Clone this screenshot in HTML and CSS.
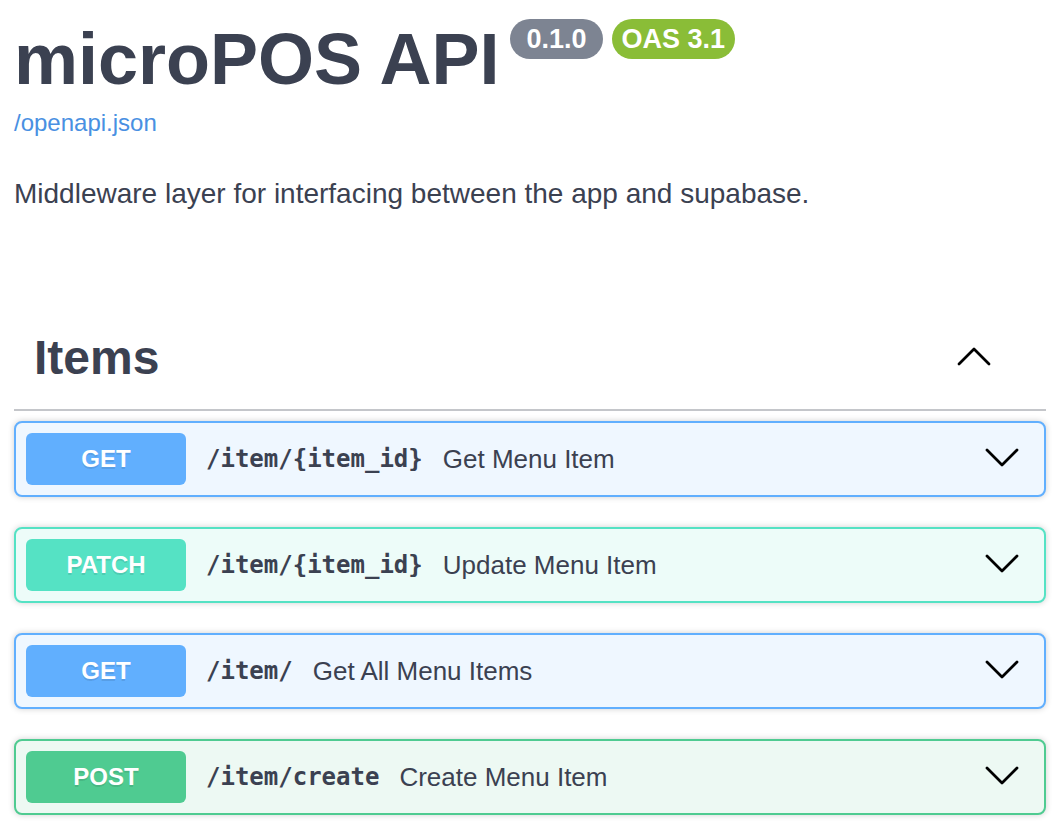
FILE: index.html
```html
<!DOCTYPE html>
<html lang="en">
<head>
<meta charset="utf-8">
<title>microPOS API</title>
<link rel="stylesheet" href="styles.css">
</head>
<body>
<div class="page">
  <div class="info">
    <div class="title-row">
      <h2 class="title">microPOS API</h2>
      <span class="badge badge-version">0.1.0</span>
      <span class="badge badge-oas">OAS 3.1</span>
    </div>
    <a class="spec-link" href="#">/openapi.json</a>
    <p class="description">Middleware layer for interfacing between the app and supabase.</p>
  </div>

  <section class="tag-section">
    <h3 class="tag-header">
      <span class="tag-name">Items</span>
      <svg class="arrow arrow-up" width="40" height="40" viewBox="0 0 20 20"><polyline points="2.5,13.5 10,6 17.5,13.5" /></svg>
    </h3>

    <div class="opblock opblock-get">
      <div class="summary">
        <span class="method">GET</span>
        <span class="path">/item/{item_id}</span>
        <span class="summary-desc">Get Menu Item</span>
        <svg class="arrow arrow-down" width="40" height="40" viewBox="0 0 20 20"><polyline points="2.5,5.5 10,13 17.5,5.5" /></svg>
      </div>
    </div>

    <div class="opblock opblock-patch">
      <div class="summary">
        <span class="method">PATCH</span>
        <span class="path">/item/{item_id}</span>
        <span class="summary-desc">Update Menu Item</span>
        <svg class="arrow arrow-down" width="40" height="40" viewBox="0 0 20 20"><polyline points="2.5,5.5 10,13 17.5,5.5" /></svg>
      </div>
    </div>

    <div class="opblock opblock-get">
      <div class="summary">
        <span class="method">GET</span>
        <span class="path">/item/</span>
        <span class="summary-desc">Get All Menu Items</span>
        <svg class="arrow arrow-down" width="40" height="40" viewBox="0 0 20 20"><polyline points="2.5,5.5 10,13 17.5,5.5" /></svg>
      </div>
    </div>

    <div class="opblock opblock-post">
      <div class="summary">
        <span class="method">POST</span>
        <span class="path">/item/create</span>
        <span class="summary-desc">Create Menu Item</span>
        <svg class="arrow arrow-down" width="40" height="40" viewBox="0 0 20 20"><polyline points="2.5,5.5 10,13 17.5,5.5" /></svg>
      </div>
    </div>
  </section>
</div>
</body>
</html>
```
FILE: styles.css
```css
html, body {
  margin: 0;
  padding: 0;
  background: #ffffff;
}

body {
  font-family: "Liberation Sans", Arial, sans-serif;
  color: #3b4151;
}

.page {
  padding: 19px 14px 0 14px;
}

.title-row {
  display: flex;
  align-items: flex-start;
}

.title {
  margin: 0;
  font-size: 72px;
  line-height: 80px;
  font-weight: 700;
  color: #3b4151;
}

.badge {
  display: inline-block;
  height: 40px;
  line-height: 40px;
  border-radius: 40px;
  color: #ffffff;
  font-size: 27px;
  font-weight: 700;
}

.badge-version {
  margin-left: 11px;
  padding: 0 16px;
  background: #7d8492;
}

.badge-oas {
  margin-left: 9px;
  padding: 0 10px;
  background: #8abd37;
}

.spec-link {
  display: block;
  margin-top: 10px;
  font-size: 24px;
  line-height: 28px;
  color: #4990e2;
  text-decoration: none;
}

.description {
  margin: 37px 0 0 0;
  font-size: 28px;
  line-height: 40px;
  color: #3b4151;
}

.tag-section {
  margin-top: 99px;
}

.tag-header {
  display: flex;
  align-items: center;
  margin: 0;
  padding: 17px 52px 23px 20px;
  border-bottom: 2px solid rgba(59, 65, 81, 0.3);
}

.tag-name {
  flex: 1;
  font-size: 48px;
  line-height: 56px;
  font-weight: 700;
  color: #3b4151;
}

.arrow polyline {
  fill: none;
  stroke: #000000;
  stroke-width: 1.4;
  stroke-linecap: round;
  stroke-linejoin: round;
}

.arrow-up {
  margin-top: -2px;
}

.opblock {
  margin-top: 10px;
  margin-bottom: 30px;
  border: 2px solid #61affe;
  border-radius: 8px;
  box-shadow: 0 0 6px rgba(0, 0, 0, 0.19);
}

.opblock + .opblock {
  margin-top: 0;
}

.summary {
  display: flex;
  align-items: center;
  padding: 10px;
}

.method {
  flex: none;
  width: 160px;
  padding: 12px 0;
  line-height: 28px;
  border-radius: 6px;
  text-align: center;
  color: #ffffff;
  font-size: 24px;
  font-weight: 700;
  text-shadow: 0 2px 0 rgba(0, 0, 0, 0.1);
}

.path {
  flex: none;
  padding: 0 20px;
  font-family: "DejaVu Sans Mono", "Liberation Mono", monospace;
  font-size: 24px;
  font-weight: 700;
  color: #3b4151;
}

.summary-desc {
  flex: 1;
  font-size: 26px;
  color: #3b4151;
}

.arrow-down {
  flex: none;
  margin-right: 12px;
}

.opblock-get {
  border-color: #61affe;
  background: #eff7ff;
}

.opblock-get .method {
  background: #61affe;
}

.opblock-patch {
  border-color: #55e2c4;
  background: #edfcf9;
}

.opblock-patch .method {
  background: #55e2c4;
}

.opblock-post {
  border-color: #4fcb91;
  background: #edf9f3;
}

.opblock-post .method {
  background: #4fcb91;
}
```
